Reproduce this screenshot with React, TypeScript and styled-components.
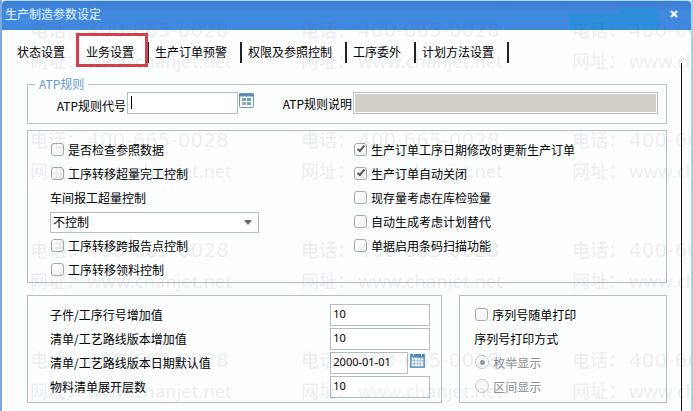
import React, { useState } from "react";
import styled, { createGlobalStyle, css } from "styled-components";

const cjk = '"Noto Sans CJK SC", sans-serif';
const line = "#b4bcc4";

const GlobalStyle = createGlobalStyle`
  *, *::before, *::after { box-sizing: border-box; }
  body { margin: 0; background: #eaf6fc; font: 12px/14px ${cjk}; color: #000; }
  button, input, select { font: inherit; color: inherit; }
`;

const Window = styled.main`
  position: relative;
  display: flex;
  flex-direction: column;
  min-height: 100vh;
  overflow: hidden;
  background: #fbfdff;
  border-left: 2px solid #7fa9d8;
  border-right: 2px solid #a4d4e6;
`;

const TitleBar = styled.header`
  display: flex;
  align-items: center;
  justify-content: space-between;
  height: 30px;
  padding: 0 13px 3px 3px;
  border-top: 1px solid #a9dcf0;
  border-radius: 4px 4px 0 0;
  color: #e2f6ff;
  background:
    linear-gradient(#2d8fdb, #2d8fdb) right 34px bottom 0 / 38px 22px no-repeat,
    linear-gradient(#2d8fdb, #2d8fdb) right 32px bottom 0 / 90px 17px no-repeat,
    linear-gradient(#3c7cd2, #4289e0 40%, #4088df);
`;

const Title = styled.h1`
  margin: 0;
  font-size: 12px;
  font-weight: 400;
  line-height: 16px;
`;

const CloseButton = styled.button`
  display: flex;
  padding: 0;
  border: 0;
  background: none;
`;

const TabStrip = styled.nav`
  display: flex;
  height: 33px;
  padding: 12px 0 0 9px;
`;

const Tab = styled.button<{ $active: boolean; $divided: boolean }>`
  position: relative;
  height: 21px;
  padding: 0 13px 2px 6px;
  border: 0;
  border-right: 2px solid ${(p) => (p.$divided ? "#222" : "transparent")};
  background: none;
  white-space: nowrap;
  ${(p) =>
    p.$active &&
    css`
      &::before {
        content: "";
        position: absolute;
        inset: -9px -1px -4px -4px;
        border: 3px solid #d34248;
      }
    `}
`;

const Panel = styled.form`
  flex: 1;
  margin-right: 9px;
  padding: 13px 14px 7px 25px;
  border-right: 1px solid #111;
`;

const RuleSet = styled.fieldset`
  display: flex;
  align-items: center;
  min-width: 0;
  margin: 0 0 6px;
  padding: 0 8px 9px 0;
  border: 1px solid ${line};
`;

const RuleLegend = styled.legend`
  margin-left: 7px;
  padding: 0 4px;
  line-height: 16px;
  color: #6a9cc8;
`;

const RuleLabel = styled.label<{ $low?: boolean }>`
  width: 99px;
  padding: ${(p) => (p.$low ? "6px 1px 0 0" : "2px 1px 0 0")};
  text-align: right;
`;

const TextBox = styled.input<{ $caret?: boolean; $width?: string }>`
  width: ${(p) => p.$width || "100%"};
  min-width: 0;
  height: 22px;
  padding: 0 2px 4px;
  border: 1px solid ${line};
  border-radius: 0;
  outline: 0;
  font: 11px/16px "Noto Sans", sans-serif;
  background: ${(p) =>
    p.$caret ? "linear-gradient(#000, #000) 3px 3px / 1px 13px no-repeat #fff" : "#fff"};
`;

const LockedBox = styled(TextBox)`
  flex: 1;
  border-color: #b9bec2;
  background: #d3cfc7;
  box-shadow: inset 0 0 0 1px #fff;
`;

const IconButton = styled.button`
  display: flex;
  align-self: flex-start;
  margin: 1px 0 0 1px;
  padding: 0;
  border: 0;
  background: none;
`;

const Box = styled.section`
  padding: 7px 10px 0 22px;
  border: 1px solid ${line};
`;

const OptionBox = styled(Box)`
  display: grid;
  grid-template-columns: 1fr 1fr;
  margin-bottom: 12px;
`;

const Lower = styled.div`
  display: grid;
  grid-template-columns: 2fr 1fr;
  gap: 17px;
`;

const NumberBox = styled(Box)`
  padding: 7px 11px 3px 22px;
`;

const PrintBox = styled(Box)`
  padding: 7px 10px 3px 14px;
`;

const Row = styled.div`
  display: flex;
  align-items: center;
  height: 24px;
  white-space: nowrap;
`;

const FieldLabel = styled.label`
  flex: 1;
`;

const FieldSlot = styled.div`
  display: flex;
  gap: 1px;
  width: 100px;
`;

const Choice = styled.label<{ $muted?: boolean }>`
  display: flex;
  align-items: center;
  gap: 4px;
  padding-left: 1px;
  color: ${(p) => (p.$muted ? "#8b8f92" : "#000")};
`;

const Check = styled.input`
  appearance: none;
  position: relative;
  width: 13px;
  height: 13px;
  margin: 0 0 2px;
  border: 1px solid #a9a9a9;
  border-radius: 3px;
  background: linear-gradient(135deg, #fff, #f1f1f1);
  &:checked::after {
    content: "";
    position: absolute;
    left: 4px;
    top: 0;
    width: 4px;
    height: 8px;
    border: solid #555;
    border-width: 0 2px 2px 0;
    transform: rotate(40deg);
  }
`;

const Radio = styled.input`
  appearance: none;
  display: grid;
  place-items: center;
  width: 14px;
  height: 14px;
  margin: 0 0 2px;
  border: 1px solid #c6c9cb;
  border-radius: 50%;
  background: #f8f9fa;
  &:checked::after {
    content: "";
    width: 5px;
    height: 5px;
    border-radius: 50%;
    background: #999;
  }
`;

const SelectWrap = styled.div`
  display: flex;
  align-items: center;
  width: 209px;
`;

const Select = styled.select`
  appearance: none;
  width: 100%;
  height: 21px;
  padding: 0 20px 0 2px;
  border: 1px solid ${line};
  border-radius: 0;
  background: #fff;
`;

const Arrow = styled.svg`
  margin-left: -15px;
  pointer-events: none;
`;

const Watermarks = styled.div`
  position: absolute;
  inset: 15px 0 0 28px;
  display: grid;
  grid-template-columns: repeat(3, 271px);
  grid-auto-rows: 110px;
  overflow: hidden;
  pointer-events: none;
  color: rgba(70, 75, 80, 0.09);
`;

const Mark = styled.div`
  font: 500 18px/31px "Noto Sans", ${cjk};
  white-space: nowrap;
`;

const MarkLine = styled.div`
  display: flex;
`;

const MarkName = styled.span`
  width: 57px;
`;

const Phone = styled.span`
  font: 20px/31px "DejaVu Sans", sans-serif;
`;

function GridIcon() {
  return (
    <svg width="15" height="15" viewBox="0 0 15 15" aria-hidden="true">
      <rect x="0.5" y="0.5" width="14" height="14" rx="1" fill="#f4f9fd" stroke="#7296b8" />
      <path d="M0 0.5h15v3H0z" fill="#5d89b4" />
      <path d="M3 5h4v3H3z" fill="#76a9a6" />
      <path d="M8 5h4v3H8z" fill="#6b9bb8" />
      <path d="M3 9h4v3H3z" fill="#b9a0ab" />
      <path d="M8 9h4v3H8z" fill="#72ab9c" />
    </svg>
  );
}

function CalendarIcon() {
  return (
    <svg width="15" height="15" viewBox="0 0 15 15" aria-hidden="true">
      <rect x="0.5" y="1.5" width="14" height="13" fill="#8db4d0" stroke="#6a9bc0" />
      <path d="M1 1h13v3H1z" fill="#4c86b2" />
      <path d="M3 0h1v3H3zM11 0h1v3h-1z" fill="#d8e8f2" />
      <path d="M2 5h11v8H2z" fill="#f5fafd" />
      <path d="M2 7.5h11M2 10.5h11M4.5 5v8M7.5 5v8M10.5 5v8" stroke="#b0cce0" />
    </svg>
  );
}

const tabs = ["状态设置", "业务设置", "生产订单预警", "权限及参照控制", "工序委外", "计划方法设置"];
const rightOptions: [string, boolean][] = [
  ["生产订单工序日期修改时更新生产订单", true],
  ["生产订单自动关闭", true],
  ["现存量考虑在库检验量", false],
  ["自动生成考虑计划替代", false],
  ["单据启用条码扫描功能", false],
];

function CheckRow({ text, checked = false }: { text: string; checked?: boolean }) {
  return (
    <Row>
      <Choice>
        <Check type="checkbox" defaultChecked={checked} />
        {text}
      </Choice>
    </Row>
  );
}

function ValueRow({ id, text, value, date }: { id: string; text: string; value: string; date?: boolean }) {
  return (
    <Row>
      <FieldLabel htmlFor={id}>{text}</FieldLabel>
      <FieldSlot>
        <TextBox id={id} defaultValue={value} $width={date ? "78px" : undefined} />
        {date && (
          <IconButton type="button" aria-label="选择日期">
            <CalendarIcon />
          </IconButton>
        )}
      </FieldSlot>
    </Row>
  );
}

export default function App() {
  const [active, setActive] = useState(1);
  return (
    <>
      <GlobalStyle />
      <Window>
        <TitleBar>
          <Title>生产制造参数设定</Title>
          <CloseButton aria-label="关闭">
            <svg width="8" height="8" viewBox="0 0 8 8" aria-hidden="true">
              <path d="M1 1l6 6M7 1L1 7" stroke="#fff" strokeWidth="2.2" />
            </svg>
          </CloseButton>
        </TitleBar>
        <TabStrip>
          {tabs.map((t, i) => (
            <Tab key={t} $active={i === active} $divided={i > 0} onClick={() => setActive(i)}>
              {t}
            </Tab>
          ))}
        </TabStrip>
        <Panel>
          <RuleSet>
            <RuleLegend>ATP规则</RuleLegend>
            <RuleLabel $low htmlFor="code">ATP规则代号</RuleLabel>
            <TextBox id="code" $caret $width="111px" />
            <IconButton type="button" aria-label="选择规则">
              <GridIcon />
            </IconButton>
            <RuleLabel htmlFor="note">ATP规则说明</RuleLabel>
            <LockedBox id="note" readOnly />
          </RuleSet>
          <OptionBox>
            <div>
              <CheckRow text="是否检查参照数据" />
              <CheckRow text="工序转移超量完工控制" />
              <Row>
                <label htmlFor="over">车间报工超量控制</label>
              </Row>
              <Row>
                <SelectWrap>
                  <Select id="over">
                    <option>不控制</option>
                  </Select>
                  <Arrow width="8" height="5" viewBox="0 0 8 5" aria-hidden="true">
                    <path d="M0 0h8L4 5z" fill="#666" />
                  </Arrow>
                </SelectWrap>
              </Row>
              <CheckRow text="工序转移跨报告点控制" />
              <CheckRow text="工序转移领料控制" />
            </div>
            <div>
              {rightOptions.map(([text, on]) => (
                <CheckRow key={text} text={text} checked={on} />
              ))}
            </div>
          </OptionBox>
          <Lower>
            <NumberBox>
              <ValueRow id="line" text="子件/工序行号增加值" value="10" />
              <ValueRow id="version" text="清单/工艺路线版本增加值" value="10" />
              <ValueRow id="date" text="清单/工艺路线版本日期默认值" value="2000-01-01" date />
              <ValueRow id="levels" text="物料清单展开层数" value="10" />
            </NumberBox>
            <PrintBox>
              <CheckRow text="序列号随单打印" />
              <Row>序列号打印方式</Row>
              <Row>
                <Choice $muted>
                  <Radio type="radio" name="print" defaultChecked disabled />
                  枚举显示
                </Choice>
              </Row>
              <Row>
                <Choice $muted>
                  <Radio type="radio" name="print" disabled />
                  区间显示
                </Choice>
              </Row>
            </PrintBox>
          </Lower>
        </Panel>
        <Watermarks aria-hidden="true">
          {Array.from({ length: 12 }, (_, i) => (
            <Mark key={i}>
              <MarkLine>
                <MarkName>电话：</MarkName>
                <Phone>400-665-0028</Phone>
              </MarkLine>
              <MarkLine>
                <MarkName>网址：</MarkName>
                <span>www.chanjet.net</span>
              </MarkLine>
            </Mark>
          ))}
        </Watermarks>
      </Window>
    </>
  );
}
